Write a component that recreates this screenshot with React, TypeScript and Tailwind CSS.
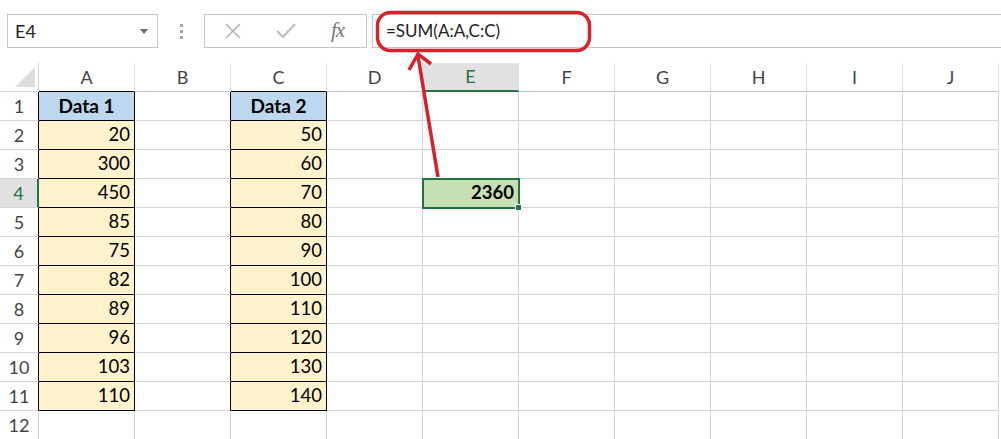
import React from 'react';

const cols = ['A', 'B', 'C', 'D', 'E', 'F', 'G', 'H', 'I', 'J'];
const colA = ['Data 1', '20', '300', '450', '85', '75', '82', '89', '96', '103', '110'];
const colC = ['Data 2', '50', '60', '70', '80', '90', '100', '110', '120', '130', '140'];
const rows = [1, 2, 3, 4, 5, 6, 7, 8, 9, 10, 11, 12];

function FormulaBar() {
  return (
    <div className="flex items-stretch pt-[14px] h-[48px]">
      {/* Name box */}
      <div className="ml-[7px] w-[151px] border border-[#c6c6c6] flex items-center justify-between pl-[7px] pr-[9px] text-[18px] text-[#222]">
        <span>E4</span>
        <svg width="8" height="5" viewBox="0 0 8 5">
          <path d="M0 0 L8 0 L4 5 Z" fill="#6b6b6b" />
        </svg>
      </div>
      {/* dots */}
      <div className="w-[46px] flex flex-col items-center justify-center gap-[3px]">
        <span className="w-[3px] h-[3px] bg-[#a6a6a6]" />
        <span className="w-[3px] h-[3px] bg-[#a6a6a6]" />
        <span className="w-[3px] h-[3px] bg-[#a6a6a6]" />
      </div>
      {/* buttons */}
      <div className="w-[163px] border border-[#c6c6c6] flex items-center">
        <svg width="18" height="18" viewBox="0 0 18 18" className="ml-[19px]">
          <path d="M2 2 L16 16 M16 2 L2 16" stroke="#b4b4b4" strokeWidth="1.6" />
        </svg>
        <svg width="20" height="16" viewBox="0 0 20 16" className="ml-[34px]">
          <path d="M1 8 L7 14 L19 1" stroke="#bcbcbc" strokeWidth="2.2" fill="none" />
        </svg>
        <span className="ml-[35px] text-[#767676] text-[21px] italic font-['Liberation_Serif',serif] tracking-[-1px]">
          fx
        </span>
      </div>
      {/* formula input */}
      <div className="ml-[5px] flex-1 border-y border-l border-[#c6c6c6] flex items-center pl-[13px] text-[17px] text-[#222]">
        =SUM(A:A,C:C)
      </div>
    </div>
  );
}

function HeaderRow() {
  return (
    <div className="flex h-[29px]">
      <div className="w-[39px] shrink-0 border-r border-b border-[#d4d4d4] flex items-end justify-end pr-[3px] pb-[4px]">
        <svg width="20" height="20" viewBox="0 0 20 20">
          <path d="M20 0 L20 20 L0 20 Z" fill="#dcdcdc" />
        </svg>
      </div>
      {cols.map((c) => {
        const isE = c === 'E';
        const dataTop = c === 'A' || c === 'C';
        return (
          <div
            key={c}
            className={`w-[96px] shrink-0 flex items-center justify-center text-[18px] border-r border-[#e0e0e0] ${
              isE
                ? 'bg-[#e1e1e1] text-[#217346] border-b-2 border-b-[#217346]'
                : dataTop
                ? 'text-[#444] border-b border-b-black'
                : 'text-[#444] border-b border-b-[#c4c4c4]'
            }`}
          >
            {c}
          </div>
        );
      })}
    </div>
  );
}

function Row({ r }: { r: number }) {
  const inData = r <= 11;
  return (
    <div className="flex h-[29px]">
      <div
        className={`w-[39px] shrink-0 flex items-center justify-center text-[18px] border-b border-b-[#d4d4d4] ${
          r === 4
            ? 'bg-[#e1e1e1] text-[#217346] border-r-2 border-r-[#217346]'
            : inData
            ? 'text-[#444] border-r border-r-black'
            : 'text-[#444] border-r border-r-[#d4d4d4]'
        }`}
      >
        {r}
      </div>
      {cols.map((c, i) => {
        const isData = inData && (c === 'A' || c === 'C');
        const leftOfC = inData && c === 'B';
        const isE4 = r === 4 && c === 'E';
        const text = isData ? (c === 'A' ? colA[r - 1] : colC[r - 1]) : isE4 ? '2360' : '';
        const bg = isE4
          ? 'bg-[#c6e0b4]'
          : isData
          ? r === 1
            ? 'bg-[#bdd7ee]'
            : 'bg-[#fff2cc]'
          : 'bg-white';
        return (
          <div
            key={i}
            className={`relative w-[96px] shrink-0 flex items-center text-[18.5px] text-black ${bg} ${
              isData || leftOfC ? 'border-r border-r-black' : 'border-r border-r-[#d4d4d4]'
            } ${isData ? 'border-b border-b-black' : 'border-b border-b-[#d4d4d4]'} ${
              isData && r === 1 ? 'justify-center font-bold text-[19px]' : 'justify-end pr-[4px]'
            } ${isE4 ? 'font-bold z-10' : ''}`}
          >
            {text}
            {isE4 && (
              <>
                <div className="absolute -left-[1px] -top-[1px] w-[98px] h-[31px] border-2 border-[#217346]" />
                <div className="absolute -right-[4px] -bottom-[4px] w-[7px] h-[7px] bg-[#217346] border border-white" />
              </>
            )}
          </div>
        );
      })}
    </div>
  );
}

export default function App() {
  return (
    <div className="relative w-[1001px] h-[439px] bg-white overflow-hidden font-['Lato',sans-serif]">
      <FormulaBar />
      <div className="mt-[15px]">
        <HeaderRow />
        {rows.map((r) => (
          <Row key={r} r={r} />
        ))}
      </div>
      {/* annotation */}
      <svg className="absolute left-0 top-0 z-20 pointer-events-none" width="1001" height="439">
        <rect x="377.5" y="12.5" width="212" height="38" rx="13" fill="none" stroke="#d7222c" strokeWidth="3.5" />
        <path d="M438 177 L418 56" stroke="#d7222c" strokeWidth="3.5" fill="none" />
        <path d="M409 70 L418 54 L431 64" stroke="#d7222c" strokeWidth="3.5" fill="none" strokeLinejoin="miter" />
      </svg>
    </div>
  );
}
